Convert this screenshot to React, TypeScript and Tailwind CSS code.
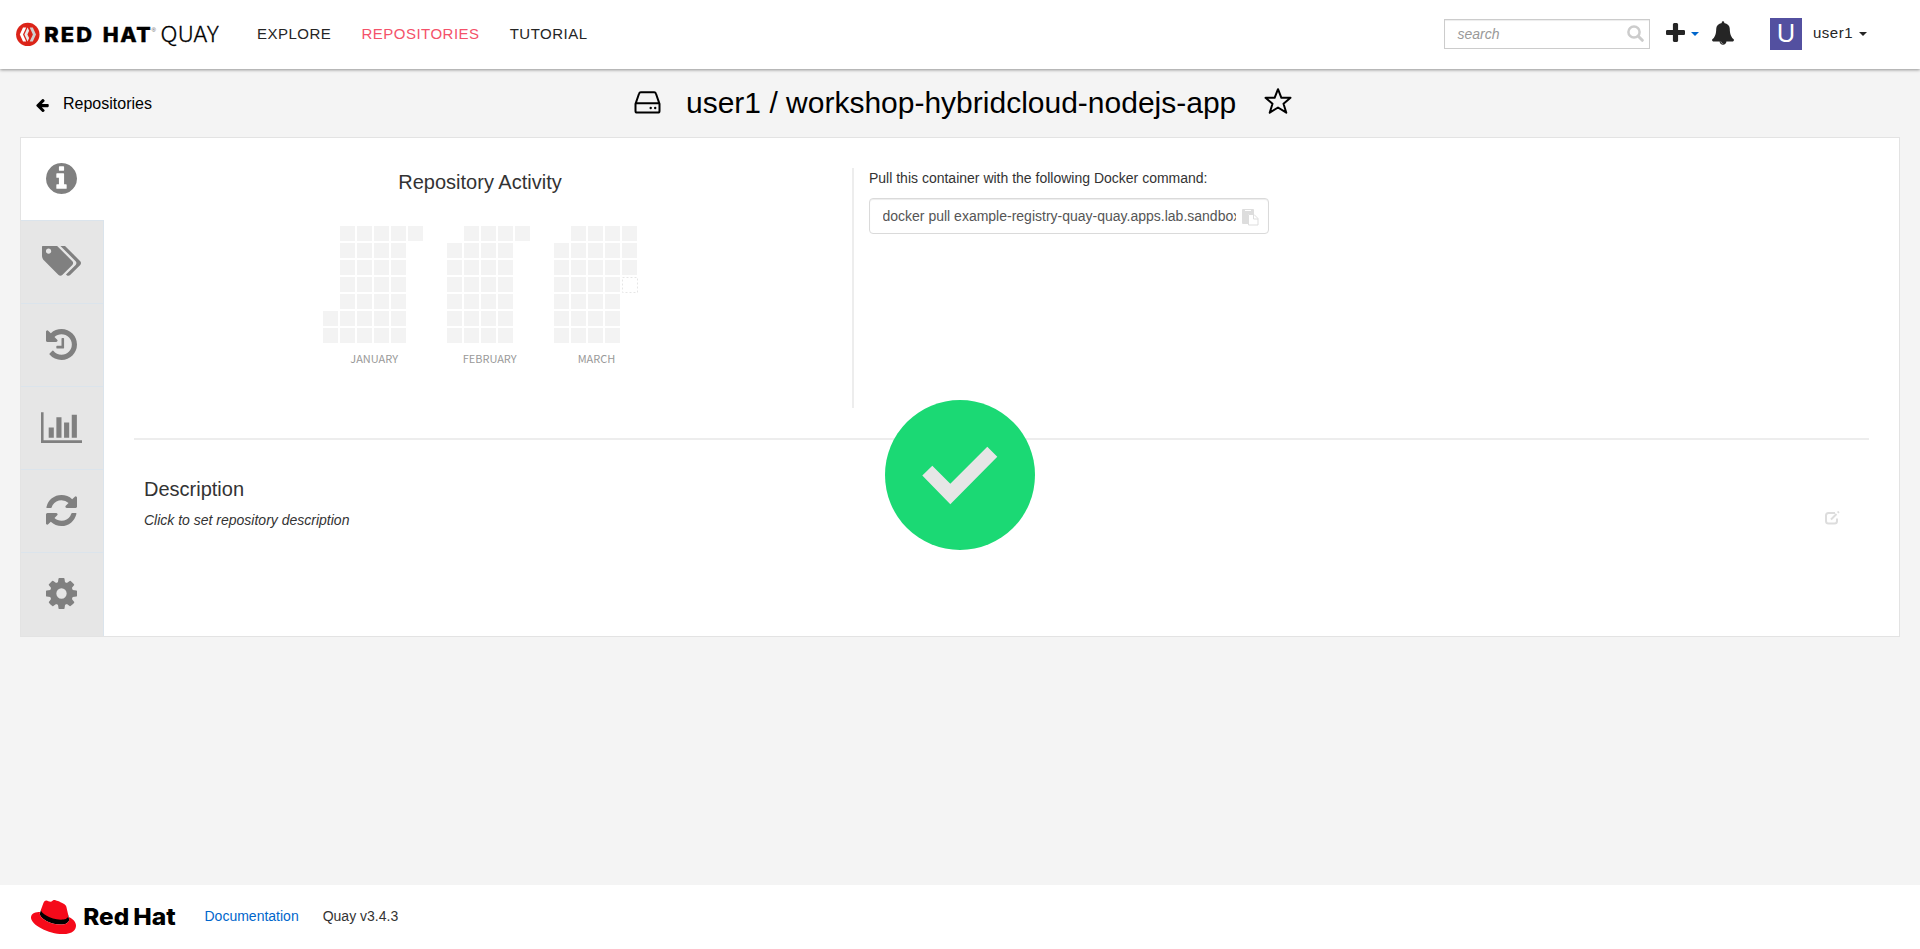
import type { ReactNode } from "react";

const ICONS = {
  info: "M1152 1376v-160q0-14-9-23t-23-9h-96v-512q0-14-9-23t-23-9h-320q-14 0-23 9t-9 23v160q0 14 9 23t23 9h96v320h-96q-14 0-23 9t-9 23v160q0 14 9 23t23 9h448q14 0 23-9t9-23zm-128-896v-160q0-14-9-23t-23-9h-192q-14 0-23 9t-9 23v160q0 14 9 23t23 9h192q14 0 23-9t9-23zm640 416q0 209-103 385.5t-279.5 279.5-385.5 103-385.5-103-279.5-279.5-103-385.5 103-385.5 279.5-279.5 385.5-103 385.5 103 279.5 279.5 103 385.5z",
  tags: "M448 448q0-53-37.5-90.5t-90.5-37.5-90.5 37.5-37.5 90.5 37.5 90.5 90.5 37.5 90.5-37.5 37.5-90.5zm1067 576q0 53-37 90l-491 492q-39 37-91 37-53 0-90-37l-715-716q-38-37-64.5-101t-26.5-117v-416q0-52 38-90t90-38h416q53 0 117 26.5t102 64.5l715 714q37 39 37 91zm384 0q0 53-37 90l-491 492q-39 37-91 37-36 0-59-14t-53-45l470-470q37-37 37-90 0-52-37-91l-715-714q-38-38-102-64.5t-117-26.5h224q53 0 117 26.5t102 64.5l715 714q37 39 37 91z",
  history:
    "M1664 896q0 156-61 298t-164 245-245 164-298 61q-172 0-327-72.5t-264-204.5q-7-10-6.5-22.5t8.5-20.5l137-138q10-9 25-9 16 2 23 12 73 95 179 147t225 52q104 0 198.5-40.5t163.5-109.5 109.5-163.5 40.5-198.5-40.5-198.5-109.5-163.5-163.5-109.5-198.5-40.5q-98 0-188 35.5t-160 101.5l137 138q31 30 14 69-17 40-59 40h-448q-26 0-45-19t-19-45v-448q0-42 40-59 39-17 69 14l130 129q107-101 244.5-156.5t284.5-55.5q156 0 298 61t245 164 164 245 61 298zm-640-288v448q0 14-9 23t-23 9h-320q-14 0-23-9t-9-23v-64q0-14 9-23t23-9h224v-352q0-14 9-23t23-9h64q14 0 23 9t9 23z",
  chart:
    "M640 896v512h-256v-512h256zm384-512v1024h-256v-1024h256zm1024 1152v128h-2048v-1536h128v1408h1920zm-640-896v768h-256v-768h256zm384-384v1152h-256v-1152h256z",
  refresh:
    "M1639 1056q0 5-1 7-64 268-268 434.5t-478 166.5q-146 0-282.5-55t-243.5-157l-129 129q-19 19-45 19t-45-19-19-45v-448q0-26 19-45t45-19h448q26 0 45 19t19 45-19 45l-137 137q71 66 161 102t187 36q134 0 250-65t186-179q11-17 53-117 8-23 30-23h192q13 0 22.5 9.5t9.5 22.5zm25-800v448q0 26-19 45t-45 19h-448q-26 0-45-19t-19-45 19-45l138-138q-148-137-349-137-134 0-250 65t-186 179q-11 17-53 117-8 23-30 23h-199q-13 0-22.5-9.5t-9.5-22.5v-7q65-268 270-434.5t480-166.5q146 0 284 55.5t245 156.5l130-129q19-19 45-19t45 19 19 45z",
  gear: "M1152 896q0-106-75-181t-181-75-181 75-75 181 75 181 181 75 181-75 75-181zm512-109v222q0 12-8 23t-20 13l-185 28q-19 54-39 91 35 50 107 138 10 12 10 25t-9 23q-27 37-99 108t-94 71q-12 0-26-9l-138-108q-44 23-91 38-16 136-29 186-7 28-36 28h-222q-14 0-24.5-8.5t-11.5-21.5l-28-184q-49-16-90-37l-141 107q-10 9-25 9-14 0-25-11-126-114-165-168-7-10-7-23 0-12 8-23 15-21 51-66.5t54-70.5q-27-50-41-99l-183-27q-13-2-21-12.5t-8-23.5v-222q0-12 8-23t19-13l186-28q14-46 39-92-40-57-107-138-10-12-10-24 0-10 9-23 26-36 98.5-107.5t94.5-71.5q13 0 26 10l138 107q44-23 91-38 16-136 29-186 7-28 36-28h222q14 0 24.5 8.5t11.5 21.5l28 184q49 16 90 37l142-107q9-9 24-9 13 0 25 10 129 119 165 170 7 8 7 22 0 12-8 23-15 21-51 66.5t-54 70.5q26 50 41 98l183 28q13 2 21 12.5t8 23.5z",
  arrowLeft:
    "M1664 896v128q0 53-32.5 90.5t-84.5 37.5h-704l293 294q38 36 38 90t-38 90l-75 76q-37 37-90 37-52 0-91-37l-651-652q-37-37-37-90 0-52 37-91l651-650q38-38 91-38 52 0 90 38l75 74q38 38 38 91t-38 91l-293 293h704q52 0 84.5 37.5t32.5 90.5z",
  plus: "M1600 736v192q0 40-28 68t-68 28h-416v416q0 40-28 68t-68 28h-192q-40 0-68-28t-28-68v-416h-416q-40 0-68-28t-28-68v-192q0-40 28-68t68-28h416v-416q0-40 28-68t68-28h192q40 0 68 28t28 68v416h416q40 0 68 28t28 68z",
  bell: "M912 1696q0-16-16-16-59 0-101.5-42.5t-42.5-101.5q0-16-16-16t-16 16q0 73 51.5 124.5t124.5 51.5q16 0 16-16zm816-288q0 52-38 90t-90 38h-448q0 106-75 181t-181 75-181-75-75-181h-448q-52 0-90-38t-38-90q50-42 91-88t85-119.5 74.5-158.5 50-206 19.5-260q0-152 117-282.5t307-158.5q-8-19-8-39 0-40 28-68t68-28 68 28 28 68q0 20-8 39 190 28 307 158.5t117 282.5q0 139 19.5 260t50 206 74.5 158.5 85 119.5 91 88z",
};

function Icon({ d, box, className }: { d: string; box: string; className: string }) {
  return (
    <svg viewBox={box} className={`block shrink-0 fill-current ${className}`} aria-hidden="true">
      <path d={d} />
    </svg>
  );
}

function QuayLogo() {
  return (
    <svg viewBox="0 0 206 30" className="block h-[30px] w-[206px] shrink-0" aria-label="Red Hat Quay">
      <circle cx="11.8" cy="15.4" r="11.7" fill="#db2419" />
      <path d="M7 8.400 3.800 15.400l3.200 7h3.200L7 15.400l3.200-7z" fill="#fff" />
      <path d="M11.600 8.400l-3.200 7 3.200 7 1.500-3.300-1.700-3.700 1.700-3.700z" fill="#e9e9e9" />
      <path d="M13.700 8.400h3.100l3.200 7-3.200 7h-3.100l3.200-7z" fill="#cfcfcf" />
      <text x="28.2" y="22.8" textLength="50" lengthAdjust="spacingAndGlyphs" className="fill-black stroke-black font-['Inter'] text-[20.5px] font-extrabold tracking-[2px] [stroke-width:0.4]">
        RED
      </text>
      <text x="86.800" y="22.8" textLength="49.5" lengthAdjust="spacingAndGlyphs" className="fill-black stroke-black font-['Inter'] text-[20.5px] font-extrabold tracking-[1.5px] [stroke-width:0.4]">
        HAT
      </text>
      <text x="135.6" y="12.8" className="fill-[#555] font-['Liberation_Sans'] text-[6px]">
        ®
      </text>
      <text x="144.6" y="22.6" textLength="58" lengthAdjust="spacingAndGlyphs" className="fill-black stroke-black font-['Noto_Sans_CJK_JP'] text-[22px] font-light [stroke-width:0.3]">
        QUAY
      </text>
    </svg>
  );
}

function RedHatLogo() {
  return (
    <svg viewBox="0 0 148 36" className="block h-[36px] w-[148px] shrink-0" aria-label="Red Hat">
      <g transform="translate(0 -4.4) scale(1.875)">
        <path fill="#000" d="M4.675 10.24 5.4 8 19.7 10.3l.628 2.928c0 1.765-1.984 2.745-4.593 2.745-5.895.004-11.06-3.451-11.06-5.734z" />
        <path
          fill="#f50a1a"
          d="M16.009 13.386c1.577 0 3.86-.326 3.86-2.202a1.765 1.765 0 0 0-.04-.431l-.94-4.08c-.216-.898-.406-1.305-1.982-2.093-1.223-.625-3.888-1.658-4.676-1.658-.733 0-.947.946-1.822.946-.842 0-1.467-.706-2.255-.706-.757 0-1.25.515-1.63 1.576 0 0-1.06 2.99-1.197 3.424a.81.81 0 0 0-.028.245c0 1.162 4.577 4.974 10.71 4.974m4.101-1.435c.218 1.032.218 1.14.218 1.277 0 1.765-1.984 2.745-4.593 2.745-5.895.004-11.06-3.451-11.06-5.734a2.326 2.326 0 0 1 .19-.925C2.746 9.415 0 9.794 0 12.217c0 3.969 9.405 8.861 16.851 8.861 5.71 0 7.149-2.582 7.149-4.62 0-1.605-1.387-3.425-3.887-4.512"
        />
      </g>
      <text x="52.2" y="26.2" textLength="46" lengthAdjust="spacingAndGlyphs" className="fill-black font-['Inter'] text-[23.5px] font-extrabold">
        Red
      </text>
      <text x="102.2" y="26.2" textLength="42.5" lengthAdjust="spacingAndGlyphs" className="fill-black font-['Inter'] text-[23.5px] font-extrabold">
        Hat
      </text>
    </svg>
  );
}

function Caret({ className }: { className: string }) {
  return (
    <svg viewBox="0 0 8 4" className={`block h-1 w-2 shrink-0 fill-current ${className}`} aria-hidden="true">
      <path d="M0 0h8L4 4z" />
    </svg>
  );
}

function Header() {
  return (
    <header className="relative z-10 flex h-[69px] shrink-0 bg-white shadow-[0_1px_3px_rgba(0,0,0,0.4)]">
      <div className="pt-[19px] pl-4">
        <QuayLogo />
      </div>
      <nav className="flex gap-[30px] pt-[24px] pl-[35px] text-[15px] leading-5 tracking-[0.5px] text-[#252525]">
        <a>EXPLORE</a>
        <a className="text-[#f4526a]">REPOSITORIES</a>
        <a>TUTORIAL</a>
      </nav>
      <div className="ml-auto flex items-start pr-[53px] text-[#252525]">
        <div className="mt-[19px] flex h-[30px] w-[206px] justify-between border border-[#ccc] pr-[5px] pl-[12.5px] shadow-[inset_0_1px_1px_rgba(0,0,0,0.075)]">
          <span className="pt-1 text-sm leading-5 text-[#999] italic">search</span>
          <svg viewBox="0 0 17 17" className="mt-[5px] block h-[17px] w-[17px] fill-none stroke-[#ccc]" aria-hidden="true">
            <circle cx="7" cy="7" r="5.6" strokeWidth="2.5" />
            <path d="M11.3 11.3l4 4" strokeWidth="3" strokeLinecap="round" />
          </svg>
        </div>
        <Icon d={ICONS.plus} box="192 128 1408 1408" className="mt-[23px] ml-4 h-[19px] w-[19px]" />
        <Caret className="mt-8 ml-1.5 text-[#0066cc]" />
        <Icon d={ICONS.bell} box="64 0 1664 1792" className="mt-[21px] ml-[13px] h-6 w-[22px]" />
        <div className="mt-[18px] ml-9 h-8 w-8 bg-[#5350a0] text-center font-['Noto_Sans'] text-[26px] leading-[29px] text-white">U</div>
        <span className="mt-[23px] ml-[11px] text-[15px] leading-5 tracking-[0.5px]">user1</span>
        <Caret className="mt-8 ml-[6px]" />
      </div>
    </header>
  );
}

function TitleBar() {
  return (
    <div className="grid h-[68px] shrink-0 grid-cols-[634px_1fr] text-black">
      <div className="flex pt-[25px] pl-[35px]">
        <Icon d={ICONS.arrowLeft} box="64 180 1600 1664" className="mt-[4.5px] h-[14px] w-[14px]" />
        <span className="ml-[14px] text-base leading-5">Repositories</span>
      </div>
      <h1 className="flex pt-[14px] text-[30px] leading-10 font-normal">
        <svg viewBox="0 0 27 24" className="mt-[7px] block h-6 w-[27px] shrink-0 fill-none stroke-black stroke-2" aria-hidden="true">
          <path d="M6.8 2.2h13.4q1.3 0 1.7 1.3L25.5 13.8v7.2q0 1.6-1.6 1.6H3.1Q1.5 22.6 1.5 21v-7.2L5.1 3.5Q5.500 2.200 6.800 2.200zM1.500 13.300h24" />
          <circle cx="16.7" cy="18" r="1.2" fill="#000" stroke="none" />
          <circle cx="21.2" cy="18" r="1.2" fill="#000" stroke="none" />
        </svg>
        <span className="ml-[25px]">user1 / workshop-hybridcloud-nodejs-app</span>
        <svg viewBox="0 0 28 28" className="mt-[4px] ml-7 block h-7 w-7 shrink-0 fill-none stroke-black stroke-2" aria-hidden="true">
          <path strokeLinejoin="round" d="M14 2.2l3.4 8.6h9.1l-7 5.9 2.8 9L14 20.5l-8.3 5.2 2.8-9-7-5.9h9.1z" />
        </svg>
      </h1>
    </div>
  );
}

function Tab({ children }: { children: ReactNode }) {
  return <div className="flex h-[83px] items-center justify-center border-t border-[#dbe4ec] pr-px pb-0.5">{children}</div>;
}

function Sidebar() {
  return (
    <aside className="flex w-[83px] shrink-0 flex-col text-[#808080]">
      <div className="flex h-[82px] shrink-0 items-center justify-center pr-0.5 pb-0.5">
        <Icon d={ICONS.info} box="128 128 1536 1536" className="h-[31px] w-[31px]" />
      </div>
      <div className="flex-1 border-r border-[#dbe4ec] bg-[#e6e6e6]">
        <Tab>
          <Icon d={ICONS.tags} box="0 256 1899 1387" className="h-[31px] w-[39px]" />
        </Tab>
        <Tab>
          <Icon d={ICONS.history} box="128 128 1536 1536" className="h-[31px] w-[31px]" />
        </Tab>
        <Tab>
          <Icon d={ICONS.chart} box="0 128 2048 1536" className="h-[31px] w-[41px]" />
        </Tab>
        <Tab>
          <Icon d={ICONS.refresh} box="128 128 1536 1536" className="h-[31px] w-[31px]" />
        </Tab>
        <Tab>
          <Icon d={ICONS.gear} box="128 128 1536 1536" className="h-[31px] w-[31px]" />
        </Tab>
      </div>
    </aside>
  );
}

/* Each column holds its first weekday row and the number of days it spans. */
const MONTHS = [
  { name: "JANUARY", x: 0, labelX: 51.2, columns: [[5, 2], [0, 7], [0, 7], [0, 7], [0, 7], [0, 1]] },
  { name: "FEBRUARY", x: 124, labelX: 166.7, columns: [[1, 6], [0, 7], [0, 7], [0, 7], [0, 1]] },
  { name: "MARCH", x: 231, labelX: 273.5, columns: [[1, 6], [0, 7], [0, 7], [0, 7], [0, 3]] },
];

function ActivityChart() {
  return (
    <svg viewBox="0 0 320 142" className="block h-[142px] w-[320px]" aria-label="Repository activity">
      {MONTHS.map((month) => (
        <g key={month.name}>
          {month.columns.map(([start, count], col) =>
            Array.from({ length: count }, (_, i) => (
              <rect key={`${col}-${i}`} x={month.x + col * 17} y={(start + i) * 17} width="15" height="15" fill="#f3f3f3" />
            )),
          )}
          <text x={month.labelX} y="137" textAnchor="middle" className="fill-[#999] font-['Noto_Sans_CJK_JP'] text-[11px]">
            {month.name}
          </text>
        </g>
      ))}
      <rect x="299.5" y="51.5" width="15" height="15" fill="none" stroke="#e6e6e6" strokeDasharray="2 2" />
    </svg>
  );
}

function Panel() {
  return (
    <main className="mx-5 flex h-[500px] shrink-0 border border-[#e3e3e3] bg-white text-[#333]">
      <Sidebar />
      <div className="flex flex-1 flex-col px-[30px] pt-[30px]">
        <section className="flex h-[240px] shrink-0">
          <div className="flex w-[720px] flex-col border-r-2 border-[#ededed]">
            <h2 className="pt-0.5 pr-[26px] text-center text-xl leading-6">Repository Activity</h2>
            <div className="mt-8 ml-[189px]">
              <ActivityChart />
            </div>
          </div>
          <div className="pl-[15px]">
            <p className="text-sm leading-5">Pull this container with the following Docker command:</p>
            <div className="mt-2.5 flex h-9 w-[400px] items-center rounded border border-[#dadada] pr-[9px] pl-[12.5px] shadow-[inset_0_1px_1px_rgba(0,0,0,0.075)]">
              <span className="w-[355px] overflow-hidden text-sm leading-5 whitespace-nowrap text-[#555]">
                docker pull example-registry-quay-quay.apps.lab.sandbox
              </span>
              <svg viewBox="0 0 17 17" className="mt-0.5 ml-[6px] block h-[17px] w-[17px] shrink-0" aria-hidden="true">
                <path d="M1 0h10q1 0 1 1v4H6v10H1q-1 0-1-1V1q0-1 1-1z" fill="#ddd" />
                <path d="M3 1.5h6" stroke="#fff" />
                <path d="M6.5 5.5h5.5l4 4v6.5H6.5z" fill="#fff" stroke="#ddd" />
                <path d="M11.5 5.5v4.5H16" fill="none" stroke="#ddd" />
              </svg>
            </div>
          </div>
        </section>
        <div className="mt-[30px] h-0.5 shrink-0 bg-[#ededed]" />
        <section className="px-2.5 pt-[37px]">
          <h2 className="text-xl leading-6">Description</h2>
          <div className="mt-[9px] flex items-start justify-between pr-[19px]">
            <p className="text-sm leading-5 italic">Click to set repository description</p>
            <svg viewBox="0 0 15 14" className="mt-px block h-[14px] w-[15px] fill-none stroke-[#ddd] stroke-2" aria-hidden="true">
              <path d="M10 2H3.5Q1 2 1 4.5v5.5q0 2.5 2.5 2.5h6q2.5 0 2.5-2.5V7.5M6 8.5l5.5-5.5M12.7 1.8l1.2-1.2" />
            </svg>
          </div>
        </section>
      </div>
    </main>
  );
}

function Footer() {
  return (
    <footer className="mt-auto flex h-16 shrink-0 bg-white text-sm leading-5 text-[#333]">
      <div className="pt-[14px] pl-[31px]">
        <RedHatLogo />
      </div>
      <a className="ml-[25.5px] pt-[21px] text-[#0066cc]">Documentation</a>
      <span className="ml-6 pt-[21px]">Quay v3.4.3</span>
    </footer>
  );
}

export default function App() {
  return (
    <div className="relative flex h-[949px] w-[1920px] flex-col overflow-hidden bg-[#f4f4f4] font-['Liberation_Sans',Arial,sans-serif]">
      <Header />
      <TitleBar />
      <Panel />
      <Footer />
      <svg viewBox="0 0 150 150" className="absolute top-[399.5px] left-[884.5px] z-20 h-[150px] w-[150px]" aria-label="Done">
        <circle cx="75" cy="75" r="75" fill="#1bd974" />
        <path d="M37.3 75.5l10-9.7 18 18 37-37 10 10-47 47.4z" fill="#e6e6e6" />
      </svg>
    </div>
  );
}
